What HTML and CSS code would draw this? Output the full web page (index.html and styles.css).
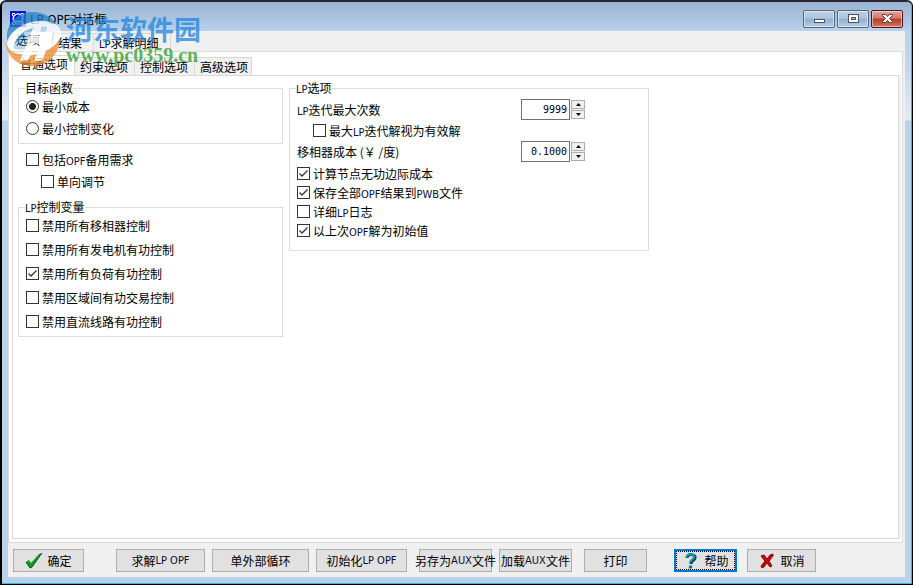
FILE: index.html
```html
<!DOCTYPE html>
<html lang="zh-CN">

<head>
    <meta charset="UTF-8">
    <meta name="viewport" content="width=device-width, initial-scale=1.0">
    <title>LP OPF对话框</title>
    <link rel="stylesheet" href="styles.css">
</head>

<body>
    <div class="window">

        <!-- 标题栏 -->
        <header class="title-bar">
            <svg class="app-icon" viewBox="0 0 16 16" aria-hidden="true">
                <rect width="16" height="16" fill="#0a10e0" />
                <path d="M2.500 5V2.500H5M11 2.500h2.500V5M2.500 11v2.500H5M11 13.500h2.500V11" stroke="#fff" fill="none" />
                <path d="M4 10.500C1.500 5 6 2.500 9 3c4 .5 5 4.500 3 7.500z" fill="#0a10e0" stroke="#fff" stroke-width="1.400" />
                <path d="M4 11l2 2h5l2-2" fill="none" stroke="#fff" />
            </svg>
            <h1><span class="en">LP OPF</span>对话框</h1>
            <div class="window-buttons">
                <button type="button" aria-label="最小化">
                    <svg viewBox="0 0 14 10"><rect x="2.5" y="5.5" width="10" height="3" fill="#fff" stroke="#4a5568" /></svg>
                </button>
                <button type="button" aria-label="最大化">
                    <svg viewBox="0 0 14 10"><rect x="2.5" y=".5" width="10" height="8" fill="#fff" stroke="#4a5568" /><rect x="5.5" y="3.5" width="4" height="2" fill="#9bb8d8" stroke="#4a5568" /></svg>
                </button>
                <button type="button" class="close" aria-label="关闭">
                    <svg viewBox="0 0 14 10"><path d="M2.500.5h3.200L7.500 2.600 9.300.5h3.200v1L9.500 4.500l3 3v1H9.300L7.500 6.400 5.700 8.500H2.500v-1l3-3-3-3z" fill="#fff" stroke="#5a3a42" /></svg>
                </button>
            </div>
        </header>

        <main class="client">
            <!-- 一级标签 -->
            <div class="tabs outer-tabs" role="tablist">
                <button type="button" role="tab" aria-selected="true">选项</button>
                <button type="button" role="tab" aria-selected="false">结果</button>
                <button type="button" role="tab" aria-selected="false"><span class="en">LP</span>求解明细</button>
            </div>

            <div class="outer-page">
                <!-- 二级标签 -->
                <div class="tabs inner-tabs" role="tablist">
                    <button type="button" role="tab" aria-selected="true">普通选项</button>
                    <button type="button" role="tab" aria-selected="false">约束选项</button>
                    <button type="button" role="tab" aria-selected="false">控制选项</button>
                    <button type="button" role="tab" aria-selected="false">高级选项</button>
                </div>

                <div class="inner-page">
                    <!-- 左列 -->
                    <div class="column left">
                        <fieldset class="group tight">
                            <legend>目标函数</legend>
                            <label class="option"><input type="radio" name="goal" checked>最小成本</label>
                            <label class="option"><input type="radio" name="goal">最小控制变化</label>
                        </fieldset>

                        <div class="reserve tight">
                            <label class="option"><input type="checkbox"><span>包括<span class="en">OPF</span>备用需求</span></label>
                            <label class="option indent"><input type="checkbox">单向调节</label>
                        </div>

                        <fieldset class="group loose">
                            <legend><span class="en">LP</span>控制变量</legend>
                            <label class="option"><input type="checkbox">禁用所有移相器控制</label>
                            <label class="option"><input type="checkbox">禁用所有发电机有功控制</label>
                            <label class="option"><input type="checkbox" checked>禁用所有负荷有功控制</label>
                            <label class="option"><input type="checkbox">禁用区域间有功交易控制</label>
                            <label class="option"><input type="checkbox">禁用直流线路有功控制</label>
                        </fieldset>
                    </div>

                    <!-- 右列 -->
                    <div class="column right">
                        <fieldset class="group">
                            <legend><span class="en">LP</span>选项</legend>
                            <div class="field first">
                                <label for="max-iter"><span class="en">LP</span>迭代最大次数</label>
                                <div class="spin">
                                    <input type="text" id="max-iter" value="9999">
                                    <div class="spin-buttons">
                                        <button type="button" aria-label="增加"><svg viewBox="0 0 5 3"><path d="M0 3h5L2.500 0z" /></svg></button>
                                        <button type="button" aria-label="减少"><svg viewBox="0 0 5 3"><path d="M0 0h5L2.500 3z" /></svg></button>
                                    </div>
                                </div>
                            </div>
                            <label class="option indent"><input type="checkbox"><span>最大<span class="en">LP</span>迭代解视为有效解</span></label>
                            <div class="field">
                                <label for="shift-cost">移相器成本 (&#xFFE5; /度)</label>
                                <div class="spin">
                                    <input type="text" id="shift-cost" value="0.1000">
                                    <div class="spin-buttons">
                                        <button type="button" aria-label="增加"><svg viewBox="0 0 5 3"><path d="M0 3h5L2.500 0z" /></svg></button>
                                        <button type="button" aria-label="减少"><svg viewBox="0 0 5 3"><path d="M0 0h5L2.500 3z" /></svg></button>
                                    </div>
                                </div>
                            </div>
                            <div class="check-list">
                                <label class="option"><input type="checkbox" checked>计算节点无功边际成本</label>
                                <label class="option"><input type="checkbox" checked><span>保存全部<span class="en">OPF</span>结果到<span class="en">PWB</span>文件</span></label>
                                <label class="option"><input type="checkbox"><span>详细<span class="en">LP</span>日志</span></label>
                                <label class="option"><input type="checkbox" checked><span>以上次<span class="en">OPF</span>解为初始值</span></label>
                            </div>
                        </fieldset>
                    </div>
                </div>
            </div>

            <!-- 底部按钮 -->
            <div class="button-bar">
                <button type="button" class="btn ok">
                    <svg viewBox="0 0 18 16"><path d="M1 9l3-2 2 3 8-9 3-1-10 14-2 1z" fill="#0aa01a" /><path d="M1 9l4 6 2-1L17 0" fill="none" stroke="#0a4a2a" /></svg>
                    确定
                </button>
                <div class="btn-set">
                    <button type="button" class="btn solve">求解<span class="en">LP OPF</span></button>
                    <button type="button" class="btn loop">单外部循环</button>
                    <button type="button" class="btn init">初始化<span class="en">LP OPF</span></button>
                </div>
                <div class="btn-set">
                    <button type="button" class="btn aux">另存为<span class="en">AUX</span>文件</button>
                    <button type="button" class="btn aux">加载<span class="en">AUX</span>文件</button>
                </div>
                <button type="button" class="btn print">打印</button>
                <div class="btn-set end">
                    <button type="button" class="btn help">
                        <svg viewBox="0 0 14 16"><path d="M3 5c0-5 9-4 8 0-.4 2.500-4 2.500-4 6" fill="none" stroke="#063c50" stroke-width="3" /><path d="M2.500 4.500c0-4.500 8.500-4 7.500-.3-.5 2.300-4 2.800-4 5.800" fill="none" stroke="#10a0b0" stroke-width="2" /><circle cx="6.500" cy="14" r="1.800" fill="#087888" /></svg>
                        帮助
                    </button>
                    <button type="button" class="btn cancel">
                        <svg viewBox="0 0 14 16"><path d="M1 3l3-1 3 4 3-4 3-1v2L9 8l3 5-2 1-3-4-3 4-2 1-1-2 4-5z" fill="#c80808" stroke="#8a0808" /></svg>
                        取消
                    </button>
                </div>
            </div>
        </main>
    </div>

    <!-- 水印 -->
    <div class="watermark">
        <svg class="mark" viewBox="0 0 56 56" aria-hidden="true">
            <path d="M1 26C1 11 12 1 26 1c11 0 20 5 25 13-12-5-26-2-33 8-5 7-9 12-13 14-2-3-4-6-4-10z" fill="#2383c2" />
            <path d="M8 28c3-9 14-14 24-13l-9 22c-6 2-12 2-16 0z" fill="#2383c2" opacity=".4" />
            <path d="M0 30c1 7 4 10 9 12 15 5 34-1 45-16 0 17-12 29-28 29C11 55 0 45 0 30z" fill="#ee8a2c" />
            <path d="M1 33C3 20 18 10 35 10c14 0 21 6 20 14-2 10-15 18-33 21 14-6 27-13 27-21 0-7-9-10-18-8C17 18 7 28 8 39c-4-1-7-3-7-6z" fill="#fff" />
            <path d="M29 12h8l-5 14h6l4-12h8L36 50h-8l7-18h-6l-7 18h-8z" fill="#fff" />
        </svg>
        <div class="site">
            <div class="site-name">河东软件园</div>
            <div class="site-url">www.pc0359.cn</div>
        </div>
    </div>
</body>

</html>
```

FILE: styles.css
```css
* {
    box-sizing: border-box;
}

html,
body {
    margin: 0;
    height: 100%;
}

body {
    position: relative;
    background: #fff;
    color: #000;
    font: 12px/16px "Noto Sans CJK SC", sans-serif;
    overflow: hidden;
}

button,
input {
    font: inherit;
    color: inherit;
    margin: 0;
    padding: 0;
}

/* 西文字符 */
.en {
    font-family: "DejaVu Sans Condensed", "DejaVu Sans", sans-serif;
    font-size: 11px;
    line-height: 12px;
    color: #0c0c38;
}

/* 窗口边框 */
.window {
    display: flex;
    flex-direction: column;
    height: 100%;
    border: 1px solid #000;
    border-top: 2px solid #2a2630;
    border-left-width: 2px;
    border-radius: 6px 6px 0 0;
    background: linear-gradient(#98b3d2 0, #b9d1ea 29px, #c0d6ee 60px, #e2ebf6 118px, #b9d1ea 119px);
    box-shadow: inset -1px -1px #35b8d8;
    padding: 0 7px 7px 6px;
}

/* 标题栏 */
.title-bar {
    display: flex;
    align-items: center;
    height: 29px;
    padding: 5px 2px 0;
}

.app-icon {
    width: 16px;
    height: 16px;
}

.title-bar h1 {
    flex: 1;
    margin: 0 0 0 4px;
    font-size: 12px;
    font-weight: normal;
}

.title-bar .en {
    font-size: 13px;
    color: #000;
}

.window-buttons {
    display: flex;
    gap: 2px;
}

.window-buttons button {
    display: flex;
    align-items: center;
    justify-content: center;
    width: 32px;
    height: 18px;
    border: 1px solid #54657c;
    border-radius: 2px;
    box-shadow: inset 0 0 0 1px rgba(255, 255, 255, 0.5);
    background: linear-gradient(#bdd0e5 0, #adc5df 45%, #93b0d0 50%, #b4cde6 100%);
}

.window-buttons svg {
    width: 14px;
    height: 10px;
}

.window-buttons .close {
    border-color: #4c1620;
    background: linear-gradient(#e3a698 0, #d3766a 45%, #b93a24 50%, #d3745c 100%);
}

/* 客户区 */
.client {
    flex: 1;
    display: flex;
    flex-direction: column;
    min-height: 0;
    background: #f0f0f0;
}

/* 标签 */
.tabs {
    display: flex;
    align-items: flex-end;
}

.tabs button {
    height: 18px;
    padding: 0 6px 0 5px;
    border: 1px solid #d9d9d9;
    border-width: 1px 1px 0 0;
    background: #f0f0f0;
    line-height: 16px;
    white-space: nowrap;
}

.tabs button[aria-selected="true"] {
    height: 20px;
    padding: 0 6px 4px;
    background: #fff;
}

.outer-tabs {
    height: 20px;
    padding-left: 2px;
}

.outer-tabs button {
    padding-right: 11px;
}

.outer-tabs button[aria-selected="true"] {
    padding-right: 12px;
}

.outer-page {
    flex: 1;
    display: flex;
    flex-direction: column;
    margin-right: 2px;
    padding: 3px;
    border: 1px solid #d9d9d9;
    background: #fff;
}

.inner-tabs {
    padding-left: 2px;
}

.inner-tabs button:last-child {
    padding-right: 3px;
}

.inner-page {
    flex: 1;
    display: flex;
    align-items: flex-start;
    gap: 6px;
    padding: 4px 5px;
    border: 1px solid #d9d9d9;
    box-shadow: 2px 0 #f0f0f0;
}

/* 分组框 */
.left {
    flex: 0 0 265px;
}

.right {
    flex: 0 0 360px;
}

.group {
    display: flex;
    flex-direction: column;
    margin: 0;
    padding: 0 7px 4px;
    border: 1px solid #dcdcdc;
}

.group legend {
    padding: 0;
    height: 16px;
    margin-left: -1px;
}

.tight {
    display: flex;
    flex-direction: column;
    gap: 1px;
}

.loose {
    gap: 3px;
}

.reserve {
    padding: 5px 8px 7px;
}

.right .group {
    padding-bottom: 10px;
}

/* 选项 */
.option {
    display: flex;
    align-items: center;
    gap: 3px;
    height: 21px;
    white-space: nowrap;
}

.reserve .indent {
    margin-left: 15px;
}

.right .indent {
    margin-left: 16px;
}

.option input {
    appearance: none;
    flex: none;
    width: 13px;
    height: 13px;
    border: 1px solid #333;
    background: #fff;
}

.option input[type="radio"] {
    border-radius: 50%;
}

.option input[type="radio"]:checked {
    background: radial-gradient(circle, #222 3px, #fff 4px);
}

.option input[type="checkbox"]:checked {
    background: url("data:image/svg+xml,%3Csvg xmlns='http://www.w3.org/2000/svg' viewBox='0 0 11 11'%3E%3Cpath d='M1.500 5.500l2.500 2.500 5.500-5.500' fill='none' stroke='%23333' stroke-width='1.300'/%3E%3C/svg%3E") center / 11px 11px no-repeat;
}

.check-list {
    padding-top: 2px;
}

.check-list .option {
    height: 19px;
}

/* 数值框 */
.field {
    display: flex;
    align-items: center;
    justify-content: space-between;
    height: 21px;
    padding-right: 56px;
}

.first {
    margin-top: 3px;
}

.spin {
    display: flex;
    align-items: center;
    gap: 1px;
}

.spin input {
    width: 49px;
    height: 21px;
    padding-right: 2px;
    border: 1px solid #707070;
    background: #fff;
    font-family: "DejaVu Sans Mono", monospace;
    font-size: 10px;
    text-align: right;
}

.spin-buttons {
    display: flex;
    flex-direction: column;
    gap: 1px;
    background: #f0f0f0;
}

.spin-buttons button {
    display: flex;
    align-items: center;
    justify-content: center;
    width: 14px;
    height: 9px;
    border: 1px solid #adadad;
    background: #f0f0f0;
}

.spin-buttons svg {
    width: 5px;
    height: 3px;
}

/* 底部按钮 */
.button-bar {
    display: flex;
    gap: 12px;
    padding: 6px 5px 5px;
}

.btn-set {
    display: flex;
    gap: 7px;
}

.end {
    gap: 10px;
    margin-left: 15px;
}

.btn {
    display: flex;
    align-items: center;
    justify-content: center;
    height: 23px;
    border: 1px solid #adadad;
    background: #e1e1e1;
    white-space: nowrap;
}

.btn svg {
    flex: none;
    width: 18px;
    height: 16px;
    margin-right: 4px;
}

.ok {
    width: 71px;
    margin-right: 20px;
}

.solve {
    width: 89px;
}

.loop {
    width: 97px;
}

.init {
    width: 91px;
}

.aux {
    width: 73px;
}

.print {
    width: 63px;
}

.help {
    width: 63px;
    border: 2px solid #0078d7;
    outline: 1px dotted #000;
    outline-offset: -3px;
}

.cancel {
    width: 69px;
}

/* 水印 */
.watermark {
    position: absolute;
    top: 11px;
    left: 6px;
    display: flex;
    gap: 4px;
    opacity: 0.75;
    pointer-events: none;
}

.mark {
    width: 56px;
    height: 56px;
}

.site {
    padding-top: 4px;
}

.site-name {
    color: #1f86e0;
    font-size: 27px;
    font-weight: bold;
    line-height: 28px;
}

.site-url {
    color: #2c9c2c;
    font: bold 20px/24px "Liberation Serif", serif;
}
```
